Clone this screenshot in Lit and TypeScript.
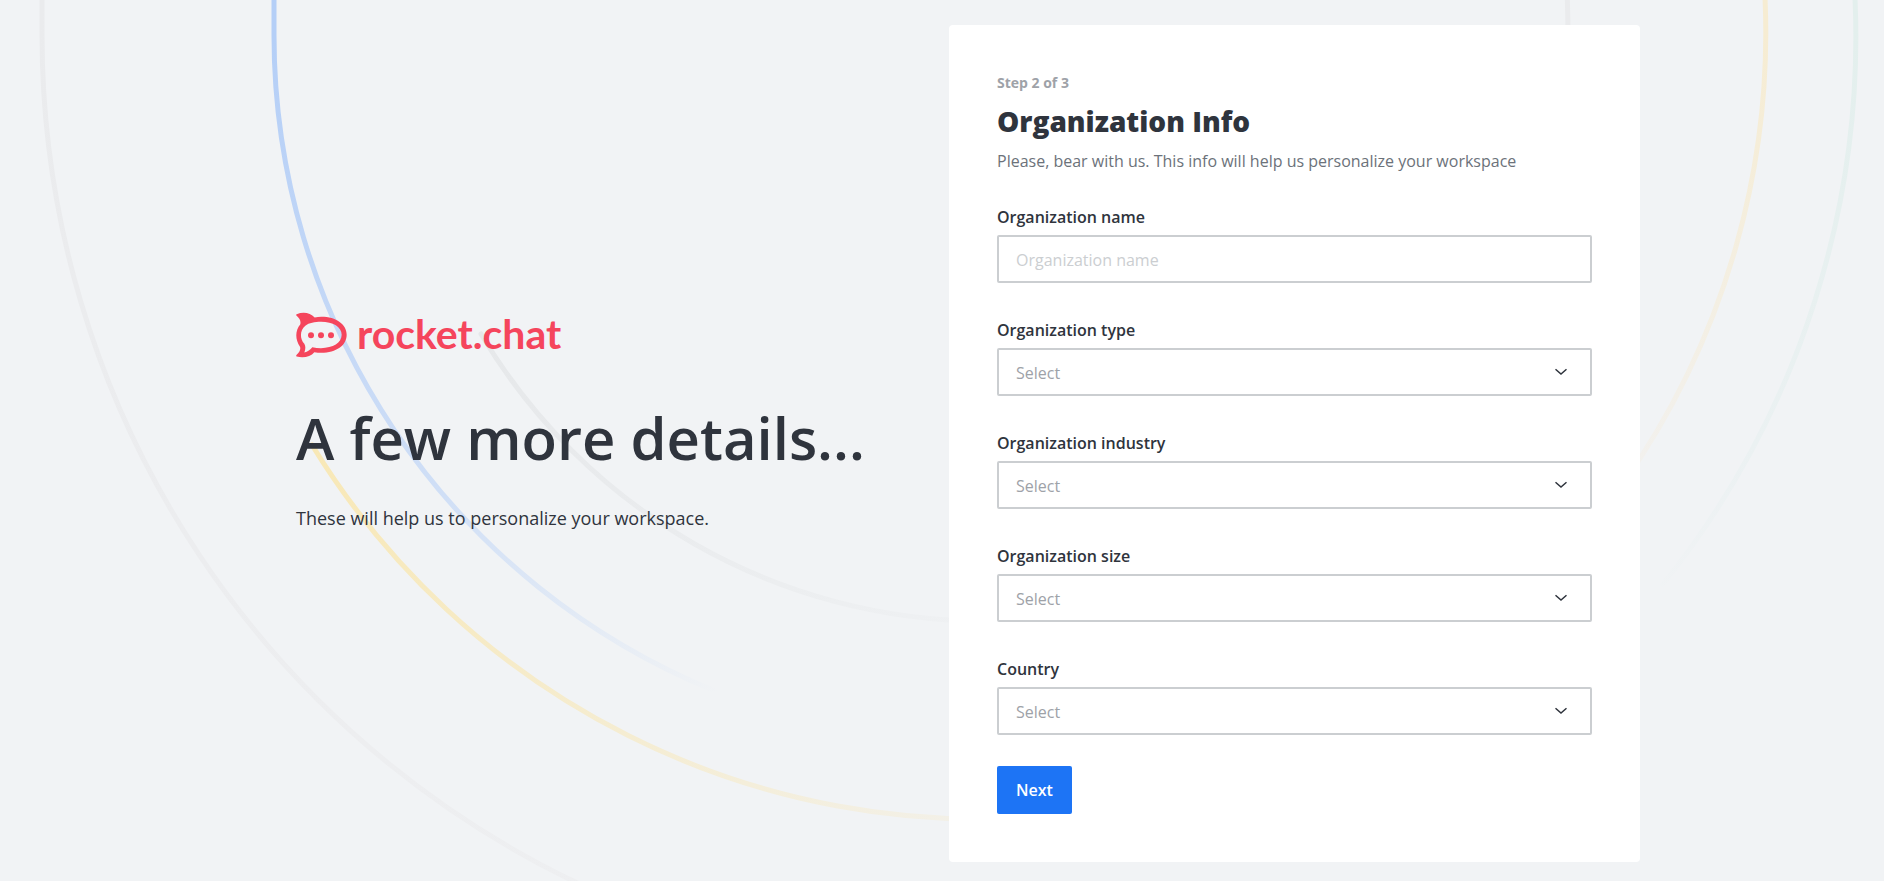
import { LitElement, html, css, svg } from "lit";
import { customElement, property } from "lit/decorators.js";

const arc = (d: string, paint: string) =>
  svg`<path d=${d} stroke="url(#${paint})" />`;

@customElement("orbit-background")
class OrbitBackground extends LitElement {
  static styles = css`
    :host {
      position: absolute;
      inset: 0;
      overflow: hidden;
      pointer-events: none;
    }
    .art {
      display: block;
      width: 100%;
      height: 100%;
    }
  `;

  render() {
    return html`
      <svg class="art" viewBox="0 0 1884 881" preserveAspectRatio="xMidYMin slice" fill="none" stroke-width="5" stroke-linecap="round" aria-hidden="true">
        <defs>
          <linearGradient id="outer" gradientUnits="userSpaceOnUse" x1="42" y1="0" x2="620" y2="900">
            <stop offset="0" stop-color="#eaebed" />
            <stop offset="1" stop-color="#eeeff1" />
          </linearGradient>
          <linearGradient id="blue" gradientUnits="userSpaceOnUse" x1="274" y1="40" x2="715" y2="694">
            <stop offset="0" stop-color="#b5cff7" />
            <stop offset="0.6" stop-color="#d0dff6" />
            <stop offset="1" stop-color="#f1f3f5" />
          </linearGradient>
          <linearGradient id="yellow" gradientUnits="userSpaceOnUse" x1="309" y1="435" x2="1050" y2="819">
            <stop offset="0" stop-color="#f8e8b6" />
            <stop offset="1" stop-color="#f2f1ed" />
          </linearGradient>
          <linearGradient id="inner" gradientUnits="userSpaceOnUse" x1="480" y1="334" x2="982" y2="621">
            <stop offset="0" stop-color="#e6e8ea" />
            <stop offset="1" stop-color="#eff1f3" />
          </linearGradient>
          <linearGradient id="sand" gradientUnits="userSpaceOnUse" x1="1765" y1="30" x2="1630" y2="480">
            <stop offset="0" stop-color="#f6ecd2" />
            <stop offset="1" stop-color="#f2f1ef" />
          </linearGradient>
          <linearGradient id="teal" gradientUnits="userSpaceOnUse" x1="1856" y1="30" x2="1650" y2="600">
            <stop offset="0" stop-color="#e3efed" />
            <stop offset="0.7" stop-color="#ebf1f2" />
            <stop offset="1" stop-color="#f1f3f5" />
          </linearGradient>
        </defs>
        ${arc("M42 -20 V35 A940 940 0 0 0 620 902", "outer")}
        ${arc("M274 -20 V35 A708 708 0 0 0 715 691", "blue")}
        ${arc("M312 445 A784 784 0 0 0 1050 816", "yellow")}
        ${arc("M481 334 A586 586 0 0 0 982 621", "inner")}
        <path d="M1567 -10 Q1568 15 1568 40" stroke="#eaebed" />
        ${arc("M1764 -20 A784 784 0 0 1 1622 485", "sand")}
        ${arc("M1854 -20 A874 874 0 0 1 1663 584", "teal")}
      </svg>
    `;
  }
}

@customElement("brand-logo")
class BrandLogo extends LitElement {
  static styles = css`
    :host {
      display: flex;
      align-items: center;
      gap: 10px;
      color: #f5455c;
    }
    .mark {
      width: 51px;
      height: 46px;
      flex: none;
    }
    .word {
      font: 700 41px/44px Lato, sans-serif;
      padding-bottom: 2px;
    }
  `;

  render() {
    return html`
      <svg class="mark" viewBox="49 38 153 137" fill="currentColor" aria-hidden="true">
        <path fill-rule="evenodd" d="M51 44C70 36 92 39 105 54C112 53 118 52 125 52C170 52 201 75 201 106C201 138 170 160 125 160C118 160 111 159 104 158C93 171 72 177 51 171Q48 169 51 166C59 158 64 150 61 142C46 120 46 93 62 74C64 64 60 57 51 49Q48 46 51 44ZM77 79C60 93 60 118 74 133C79 142 77 151 74 159C84 157 92 150 98 143C106 145 115 146 124 146C160 146 186 130 186 106C186 83 160 67 124 67C105 67 88 70 77 79Z" />
        <circle cx="94" cy="107" r="9" />
        <circle cx="124" cy="107" r="9" />
        <circle cx="154" cy="107" r="9" />
      </svg>
      <span class="word">rocket.chat</span>
    `;
  }
}

@customElement("form-field")
class FormField extends LitElement {
  @property() label = "";
  @property() kind: "text" | "select" = "select";

  static styles = css`
    :host {
      display: flex;
      flex-direction: column;
      gap: 6px;
    }
    .label {
      font-size: 16px;
      line-height: 24px;
      font-weight: 600;
      color: #2f343d;
    }
    .box {
      display: grid;
      align-items: center;
    }
    .control {
      grid-area: 1 / 1;
      box-sizing: border-box;
      width: 100%;
      height: 48px;
      margin: 0;
      padding: 1px 17px 0;
      border: 2px solid #cbced1;
      border-radius: 2px;
      background: #fff;
      color: #9ea2a8;
      font: inherit;
      font-size: 16px;
      line-height: 24px;
      appearance: none;
    }
    .control::placeholder {
      color: #cbced1;
      opacity: 1;
    }
    .control:focus {
      outline: 2px solid #1d74f5;
    }
    .chevron {
      grid-area: 1 / 1;
      justify-self: end;
      width: 14px;
      height: 8px;
      margin-right: 24px;
      pointer-events: none;
    }
  `;

  render() {
    return html`
      <label class="label" for="control">${this.label}</label>
      <div class="box">
        ${this.kind === "text"
          ? html`<input class="control" id="control" type="text" placeholder=${this.label} />`
          : html`
              <select class="control" id="control">
                <option value="">Select</option>
              </select>
              <svg class="chevron" viewBox="0 0 14 8" fill="none" stroke="#2f343d" stroke-width="1.5" aria-hidden="true">
                <path d="M1.5 1.2L7 6L12.5 1.2" />
              </svg>
            `}
      </div>
    `;
  }
}

@customElement("app-root")
class AppRoot extends LitElement {
  static styles = css`
    :host {
      display: block;
      position: relative;
      min-height: 100vh;
      background: #f1f3f5;
      color: #2f343d;
      font-family: "Open Sans", "Noto Sans", sans-serif;
    }
    .page {
      position: relative;
      box-sizing: border-box;
      min-height: 100vh;
      padding: 25px 0 19px;
      display: grid;
      grid-template-columns: 296fr 653fr 691fr 244fr;
      align-items: center;
    }
    .intro {
      grid-column: 2;
      display: flex;
      flex-direction: column;
      padding-bottom: 44px;
    }
    .title {
      margin: 38px 0 24px;
      font-size: 58px;
      line-height: 84px;
      font-weight: 600;
    }
    .lead {
      margin: 0;
      font-size: 18px;
      line-height: 28px;
    }
    .card {
      grid-column: 3;
      box-sizing: border-box;
      padding: 48px;
      border-radius: 4px;
      background: #fff;
    }
    .step {
      margin: 0;
      font-size: 14px;
      line-height: 20px;
      font-weight: 700;
      color: #9ea2a8;
    }
    .heading {
      margin: 8px 0;
      font-size: 28px;
      line-height: 40px;
      font-weight: 800;
    }
    .hint {
      margin: 0 0 32px;
      font-size: 16px;
      line-height: 24px;
      color: #6c727a;
    }
    .fields {
      display: flex;
      flex-direction: column;
      gap: 35px;
      margin-bottom: 31px;
    }
    .next {
      display: block;
      height: 48px;
      padding: 0 19px;
      border: 0;
      border-radius: 2px;
      background: #1d74f5;
      color: #fff;
      font: inherit;
      font-size: 16px;
      line-height: 24px;
      font-weight: 600;
      cursor: pointer;
    }
    @media (max-width: 1100px) {
      .page {
        grid-template-columns: 1fr;
        gap: 32px;
        padding: 24px;
      }
      .intro,
      .card {
        grid-column: 1;
      }
    }
  `;

  render() {
    return html`
      <orbit-background></orbit-background>
      <main class="page">
        <section class="intro">
          <brand-logo></brand-logo>
          <h1 class="title">A few more details...</h1>
          <p class="lead">These will help us to personalize your workspace.</p>
        </section>
        <form class="card" @submit=${(e: Event) => e.preventDefault()}>
          <p class="step">Step 2 of 3</p>
          <h2 class="heading">Organization Info</h2>
          <p class="hint">Please, bear with us. This info will help us personalize your workspace</p>
          <div class="fields">
            <form-field kind="text" label="Organization name"></form-field>
            <form-field label="Organization type"></form-field>
            <form-field label="Organization industry"></form-field>
            <form-field label="Organization size"></form-field>
            <form-field label="Country"></form-field>
          </div>
          <button class="next" type="submit">Next</button>
        </form>
      </main>
    `;
  }
}
